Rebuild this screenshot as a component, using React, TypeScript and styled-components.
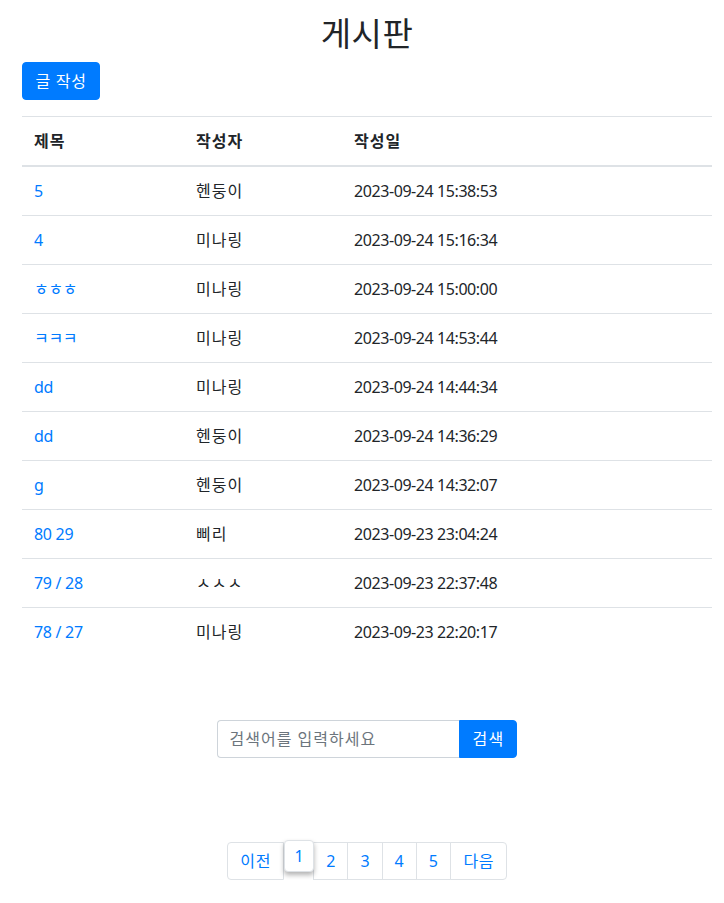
import React from "react";
import styled, { createGlobalStyle } from "styled-components";

const Global = createGlobalStyle`
  html, body { margin: 0; padding: 0; background: #fff; }
  body {
    font-family: "Noto Sans", "Noto Sans CJK KR", sans-serif;
    font-size: 16px;
    line-height: 1.5;
    color: #212529;
  }
  * { box-sizing: border-box; }
`;

const Page = styled.div`
  padding: 14px 12px 20px 22px;
`;

const Title = styled.h1`
  margin: 0 0 8px;
  text-align: center;
  font-size: 33px;
  font-weight: 400;
  line-height: 1.2;
  letter-spacing: 0.5px;
`;

const PrimaryButton = styled.button`
  font-family: inherit;
  font-size: 16px;
  line-height: 24px;
  padding: 6px 12px 6px 12.5px;
  letter-spacing: 0.7px;
  color: #fff;
  background: #007bff;
  border: 1px solid #007bff;
  border-radius: 4px;
  cursor: pointer;
`;

const Table = styled.table`
  width: 100%;
  margin-top: 16px;
  border-collapse: collapse;
`;

const Th = styled.th<{ $w?: number }>`
  text-align: left;
  font-weight: 700;
  padding: 12px;
  letter-spacing: 1px;
  border-top: 1px solid #dee2e6;
  border-bottom: 2px solid #dee2e6;
  width: ${(p) => (p.$w ? `${p.$w}px` : "auto")};
`;

const Td = styled.td<{ $kind?: "title" | "author" | "date" }>`
  padding: 12px;
  border-top: 1px solid #dee2e6;
  vertical-align: top;
  letter-spacing: ${(p) =>
    p.$kind === "author" ? "1px" : p.$kind === "date" ? "-0.42px" : "-0.3px"};
`;

const TitleLink = styled.a`
  color: #007bff;
  text-decoration: none;
`;

const SearchRow = styled.form`
  display: flex;
  justify-content: center;
  margin-top: 64px;
`;

const SearchInput = styled.input`
  width: 242px;
  height: 38px;
  padding: 6px 12px;
  font-family: inherit;
  font-size: 16px;
  letter-spacing: 1px;
  color: #495057;
  border: 1px solid #ced4da;
  border-right: none;
  border-radius: 4px 0 0 4px;
  outline: none;
  &::placeholder { color: #6c757d; }
`;

const SearchButton = styled(PrimaryButton)`
  height: 38px;
  padding: 6px 12px 6px 13px;
  letter-spacing: 1.2px;
  border-radius: 0 4px 4px 0;
`;

const Pager = styled.ul`
  display: flex;
  justify-content: center;
  align-items: flex-start;
  list-style: none;
  padding: 0;
  margin: 84px 0 0;
`;

const PageItem = styled.li<{ $first?: boolean; $last?: boolean; $active?: boolean; $ko?: boolean }>`
  display: flex;
  align-items: center;
  justify-content: center;
  height: ${(p) => (p.$active ? "32px" : "38px")};
  margin-top: ${(p) => (p.$active ? "-2px" : "0")};
  padding: ${(p) => (p.$active ? "0 9.5px" : p.$ko ? "0 12px 0 12.5px" : "0 12px")};
  margin-left: ${(p) => (p.$first || p.$active ? "0" : "-1px")};
  color: #007bff;
  font-size: 16px;
  line-height: 20px;
  letter-spacing: ${(p) => (p.$ko ? "0.7px" : "0")};
  background: #fff;
  border: 1px solid #dee2e6;
  border-radius: ${(p) =>
    p.$active ? "4px" : p.$first ? "4px 0 0 4px" : p.$last ? "0 4px 4px 0" : "0"};
  box-shadow: ${(p) => (p.$active ? "0 3px 5px rgba(0,0,0,0.3)" : "none")};
  position: ${(p) => (p.$active ? "relative" : "static")};
  z-index: ${(p) => (p.$active ? 2 : "auto")};
  cursor: pointer;
`;

const rows = [
  ["5", "헨둥이", "2023-09-24 15:38:53"],
  ["4", "미나링", "2023-09-24 15:16:34"],
  ["ㅎㅎㅎ", "미나링", "2023-09-24 15:00:00"],
  ["ㅋㅋㅋ", "미나링", "2023-09-24 14:53:44"],
  ["dd", "미나링", "2023-09-24 14:44:34"],
  ["dd", "헨둥이", "2023-09-24 14:36:29"],
  ["g", "헨둥이", "2023-09-24 14:32:07"],
  ["80 29", "삐리", "2023-09-23 23:04:24"],
  ["79 / 28", "ㅅㅅㅅ", "2023-09-23 22:37:48"],
  ["78 / 27", "미나링", "2023-09-23 22:20:17"],
];

export default function App() {
  return (
    <Page>
      <Global />
      <Title>게시판</Title>
      <PrimaryButton>글 작성</PrimaryButton>
      <Table>
        <thead>
          <tr>
            <Th $w={162}>제목</Th>
            <Th $w={158}>작성자</Th>
            <Th>작성일</Th>
          </tr>
        </thead>
        <tbody>
          {rows.map((r, i) => (
            <tr key={i}>
              <Td $kind="title">
                <TitleLink href="#">{r[0]}</TitleLink>
              </Td>
              <Td $kind="author">{r[1]}</Td>
              <Td $kind="date">{r[2]}</Td>
            </tr>
          ))}
        </tbody>
      </Table>
      <SearchRow onSubmit={(e) => e.preventDefault()}>
        <SearchInput placeholder="검색어를 입력하세요" />
        <SearchButton type="submit">검색</SearchButton>
      </SearchRow>
      <Pager>
        <PageItem $first $ko>이전</PageItem>
        <PageItem $active>1</PageItem>
        <PageItem>2</PageItem>
        <PageItem>3</PageItem>
        <PageItem>4</PageItem>
        <PageItem>5</PageItem>
        <PageItem $last $ko>다음</PageItem>
      </Pager>
    </Page>
  );
}
